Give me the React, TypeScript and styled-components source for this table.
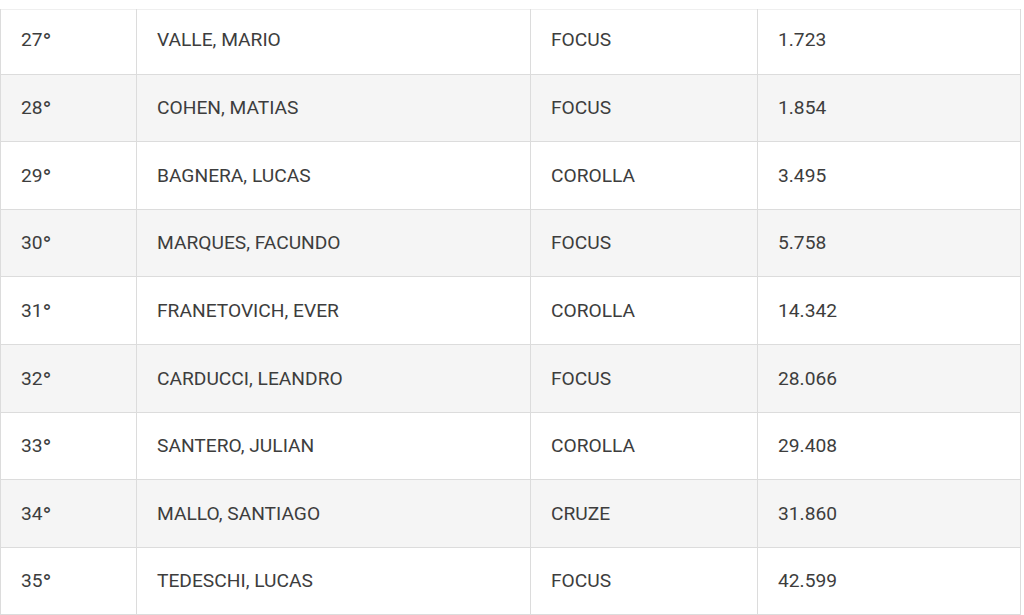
import React from 'react'
import styled, { createGlobalStyle } from 'styled-components'

const GlobalStyle = createGlobalStyle`
  html, body {
    margin: 0;
    padding: 0;
    background: #ffffff;
  }
  body {
    font-family: Roboto, 'Liberation Sans', Arial, sans-serif;
  }
`

const Page = styled.div`
  width: 1024px;
  height: 615px;
  overflow: hidden;
  padding-top: 9px;
  box-sizing: border-box;
`

const Table = styled.table`
  width: 1020px;
  border-collapse: collapse;
  table-layout: fixed;
  border-top: 1px solid #efefef;
  color: #3d3d3d;
  font-size: 19.2px;
`

const Col = styled.col<{ $w: number }>`
  width: ${(p) => p.$w}px;
`

const Row = styled.tr<{ $shade?: boolean; $first?: boolean }>`
  height: ${(p) => (p.$first ? '64.6px' : '67.6px')};
  background: ${(p) => (p.$shade ? '#f5f5f5' : '#ffffff')};
  border-bottom: 1px solid #dcdcdc;
`

const Cell = styled.td<{ $first?: boolean }>`
  padding: ${(p) => (p.$first ? '0 20px 4px 20px' : '0 20px')};
  border-left: 1px solid #dcdcdc;
  border-right: 1px solid #dcdcdc;
  vertical-align: middle;
  white-space: nowrap;
  line-height: 1;
`

// the ordinal mark is drawn a bit larger than the plain degree glyph
const Deg = styled.span`
  font-size: 1.25em;
  line-height: 0;
  vertical-align: -0.16em;
`

const widths = [136, 394, 227, 263]

const rows = [
  ['27', 'VALLE, MARIO', 'FOCUS', '1.723'],
  ['28', 'COHEN, MATIAS', 'FOCUS', '1.854'],
  ['29', 'BAGNERA, LUCAS', 'COROLLA', '3.495'],
  ['30', 'MARQUES, FACUNDO', 'FOCUS', '5.758'],
  ['31', 'FRANETOVICH, EVER', 'COROLLA', '14.342'],
  ['32', 'CARDUCCI, LEANDRO', 'FOCUS', '28.066'],
  ['33', 'SANTERO, JULIAN', 'COROLLA', '29.408'],
  ['34', 'MALLO, SANTIAGO', 'CRUZE', '31.860'],
  ['35', 'TEDESCHI, LUCAS', 'FOCUS', '42.599'],
]

const App = () => {
  return (
    <>
      <GlobalStyle />
      <Page>
        <Table>
          <colgroup>
            {widths.map((w, i) => (
              <Col key={i} $w={w} />
            ))}
          </colgroup>
          <tbody>
            {rows.map(([pos, name, car, pts], i) => (
              <Row key={pos} $shade={i % 2 === 1} $first={i === 0}>
                <Cell $first={i === 0}>
                  {pos}
                  <Deg>°</Deg>
                </Cell>
                <Cell $first={i === 0}>{name}</Cell>
                <Cell $first={i === 0}>{car}</Cell>
                <Cell $first={i === 0}>{pts}</Cell>
              </Row>
            ))}
          </tbody>
        </Table>
      </Page>
    </>
  )
}

export default App
